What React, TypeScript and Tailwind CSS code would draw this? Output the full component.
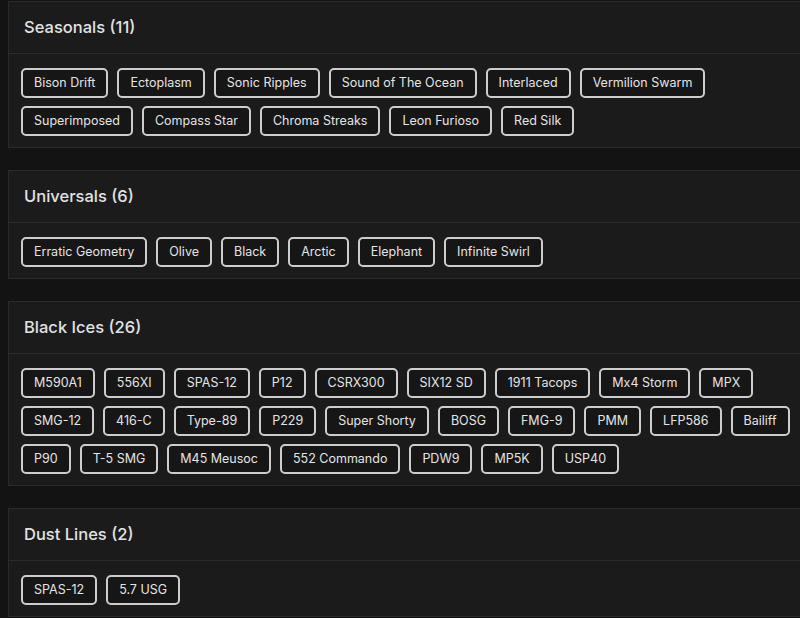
import React from 'react';

type Group = { title: string; items: string[] };

const groups: Group[] = [
  {
    title: 'Seasonals',
    items: [
      'Bison Drift', 'Ectoplasm', 'Sonic Ripples', 'Sound of The Ocean', 'Interlaced', 'Vermilion Swarm',
      'Superimposed', 'Compass Star', 'Chroma Streaks', 'Leon Furioso', 'Red Silk',
    ],
  },
  {
    title: 'Universals',
    items: ['Erratic Geometry', 'Olive', 'Black', 'Arctic', 'Elephant', 'Infinite Swirl'],
  },
  {
    title: 'Black Ices',
    items: [
      'M590A1', '556XI', 'SPAS-12', 'P12', 'CSRX300', 'SIX12 SD', '1911 Tacops', 'Mx4 Storm', 'MPX',
      'SMG-12', '416-C', 'Type-89', 'P229', 'Super Shorty', 'BOSG', 'FMG-9', 'PMM', 'LFP586', 'Bailiff',
      'P90', 'T-5 SMG', 'M45 Meusoc', '552 Commando', 'PDW9', 'MP5K', 'USP40',
    ],
  },
  {
    title: 'Dust Lines',
    items: ['SPAS-12', '5.7 USG'],
  },
];

const Tag: React.FC<{ label: string }> = ({ label }) => (
  <span className="h-[30px] px-[11px] flex items-center border-2 border-[#cdcdcd] rounded-[5px] bg-[#161616] text-[12.5px] text-[#e4e4e4] whitespace-nowrap">
    {label}
  </span>
);

const Card: React.FC<{ group: Group }> = ({ group }) => (
  <div className="w-[816px] shrink-0 bg-[#1b1b1b] border border-[#2a2a2a]">
    <div className="h-[52px] px-[15px] flex items-center border-b border-[#2c2c2c]">
      <h2 className="text-[16.5px] font-medium text-[#e2e2e2]">
        {group.title} ({group.items.length})
      </h2>
    </div>
    <div className="px-[12px] pt-[14px] pb-[11px] flex flex-wrap gap-x-[9px] gap-y-[8px]">
      {group.items.map((item, i) => (
        <Tag key={i} label={item} />
      ))}
    </div>
  </div>
);

export default function App() {
  return (
    <div
      className="w-[800px] h-[618px] overflow-hidden bg-[#131313] pl-2 pt-[1px] flex flex-col gap-[22px]"
      style={{ fontFamily: 'Inter, "Noto Sans", sans-serif' }}
    >
      {groups.map((g) => (
        <Card key={g.title} group={g} />
      ))}
    </div>
  );
}
